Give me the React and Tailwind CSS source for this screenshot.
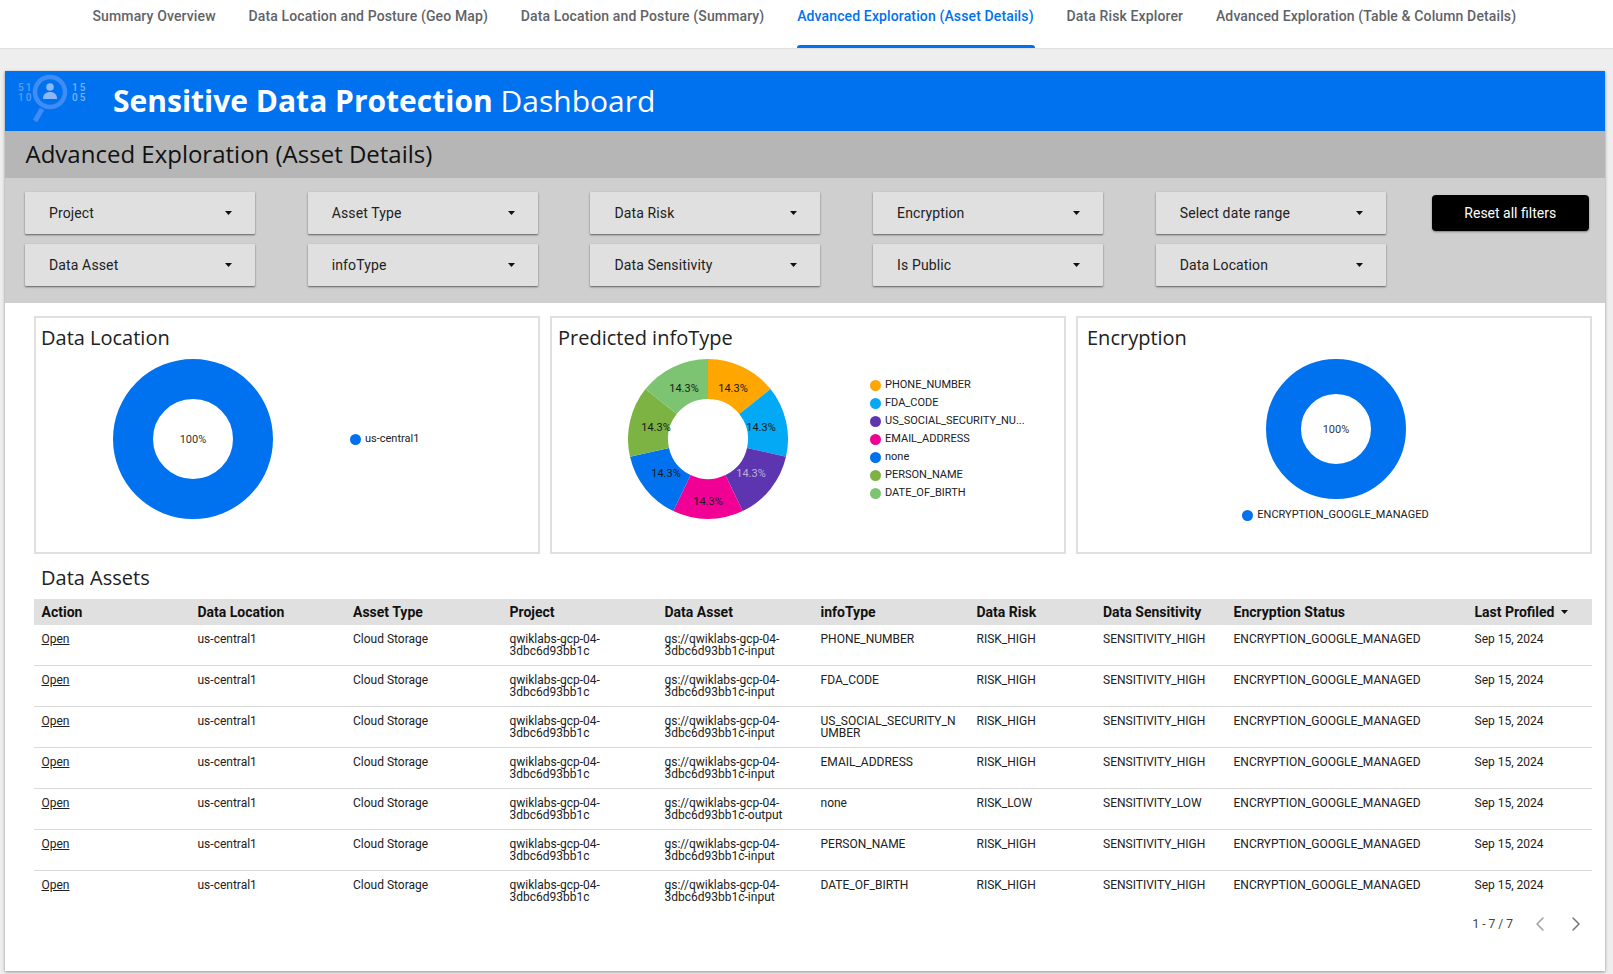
import React from "react";
import { ChevronLeft, ChevronRight } from "lucide-react";

const tabs = [
  "Summary Overview",
  "Data Location and Posture (Geo Map)",
  "Data Location and Posture (Summary)",
  "Advanced Exploration (Asset Details)",
  "Data Risk Explorer",
  "Advanced Exploration (Table & Column Details)",
];

const filters = [
  "Project",
  "Asset Type",
  "Data Risk",
  "Encryption",
  "Select date range",
  "Data Asset",
  "infoType",
  "Data Sensitivity",
  "Is Public",
  "Data Location",
];

// dx/dy: where the percent label sits, measured from the donut centre
const slices = [
  { name: "PHONE_NUMBER", color: "#ffa600", dx: 25, dy: -51 },
  { name: "FDA_CODE", color: "#03a9f4", dx: 53, dy: -12 },
  { name: "US_SOCIAL_SECURITY_NU...", color: "#5e35b1", dx: 43, dy: 34, light: true },
  { name: "EMAIL_ADDRESS", color: "#f10096", dx: 0, dy: 62 },
  { name: "none", color: "#0072f0", dx: -42, dy: 34 },
  { name: "PERSON_NAME", color: "#7cb342", dx: -52, dy: -12 },
  { name: "DATE_OF_BIRTH", color: "#7cc471", dx: -24, dy: -51 },
];

const columns = [
  { label: "Action", width: "w-[156px]" },
  { label: "Data Location", width: "w-[155.5px]" },
  { label: "Asset Type", width: "w-[156.5px]" },
  { label: "Project", width: "w-[155px]" },
  { label: "Data Asset", width: "w-[156px]" },
  { label: "infoType", width: "w-[156px]" },
  { label: "Data Risk", width: "w-[126.5px]" },
  { label: "Data Sensitivity", width: "w-[130.5px]" },
  { label: "Encryption Status", width: "w-[241px]" },
  { label: "Last Profiled", width: "w-[125px]" },
];

const rows = [
  ["input", "PHONE_NUMBER", "RISK_HIGH", "SENSITIVITY_HIGH"],
  ["input", "FDA_CODE", "RISK_HIGH", "SENSITIVITY_HIGH"],
  ["input", "US_SOCIAL_SECURITY_NUMBER", "RISK_HIGH", "SENSITIVITY_HIGH"],
  ["input", "EMAIL_ADDRESS", "RISK_HIGH", "SENSITIVITY_HIGH"],
  ["output", "none", "RISK_LOW", "SENSITIVITY_LOW"],
  ["input", "PERSON_NAME", "RISK_HIGH", "SENSITIVITY_HIGH"],
  ["input", "DATE_OF_BIRTH", "RISK_HIGH", "SENSITIVITY_HIGH"],
];

const point = (c, r, deg) => {
  const a = ((deg - 90) * Math.PI) / 180;
  return [c + r * Math.cos(a), c + r * Math.sin(a)];
};

const slicePath = (c, outer, inner, from, to) => {
  const [x1, y1] = point(c, outer, from);
  const [x2, y2] = point(c, outer, to);
  const [x3, y3] = point(c, inner, to);
  const [x4, y4] = point(c, inner, from);
  return `M${x1} ${y1}A${outer} ${outer} 0 0 1 ${x2} ${y2}L${x3} ${y3}A${inner} ${inner} 0 0 0 ${x4} ${y4}Z`;
};

const Caret = () => (
  <svg width="7" height="4" viewBox="0 0 7 4" className="shrink-0">
    <path d="M0 0h7L3.5 4z" fill="#111" />
  </svg>
);

const Logo = () => (
  <div className="relative h-[60px] w-[108px] shrink-0">
    <svg width="50" height="56" viewBox="0 0 50 56" className="absolute left-[20px] top-[-2px]">
      <circle cx="25" cy="24" r="15" fill="none" stroke="#3f8cf4" strokeWidth="4.5" />
      <circle cx="25" cy="19" r="3.8" fill="#8ab8f9" />
      <path d="M18 31c0-5 3-7 7-7s7 2 7 7z" fill="#8ab8f9" />
      <path d="M17 41l-7 12" stroke="#3f8cf4" strokeWidth="5" />
    </svg>
    <div className="absolute left-[13px] top-[13px] text-[10px] leading-[10px] font-['Roboto',sans-serif] font-medium tracking-[2px] text-[#5b9df6]">
      51
      <br />
      10
    </div>
    <div className="absolute left-[67px] top-[13px] text-[10px] leading-[10px] font-['Roboto',sans-serif] font-medium tracking-[2px] text-[#7eb2f7]">
      15
      <br />
      05
    </div>
  </div>
);

const Card = ({ title, className, titleClass, children }) => (
  <div className={`h-[238px] border-2 border-[#e0e0e0] bg-white ${className}`}>
    <div className={`h-[41px] pt-[6px] font-['Open_Sans',sans-serif] text-[20px] leading-[28px] text-[#212121] ${titleClass}`}>
      {title}
    </div>
    {children}
  </div>
);

const LegendItem = ({ color, name }) => (
  <div className="flex h-[18px] items-center gap-[4px] text-[11px] text-[#212121]">
    <span className="h-[11px] w-[11px] rounded-full" style={{ backgroundColor: color }} />
    <span>{name}</span>
  </div>
);

const FullDonut = ({ size }) => {
  const c = size / 2;
  return (
    <svg width={size} height={size} viewBox={`0 0 ${size} ${size}`} className="shrink-0">
      <circle cx={c} cy={c} r={c * 0.75} fill="none" stroke="#0072f0" strokeWidth={c / 2} />
      <text x={c} y={c + 4} textAnchor="middle" fontSize="11" fill="#333">
        100%
      </text>
    </svg>
  );
};

const InfoTypeDonut = () => {
  const step = 360 / slices.length;
  return (
    <svg width="160" height="160" viewBox="0 0 160 160" className="shrink-0">
      {slices.map((s, i) => (
        <path key={s.name} d={slicePath(80, 80, 40, i * step, (i + 1) * step)} fill={s.color} />
      ))}
      {slices.map((s) => (
        <text
          key={s.name}
          x={80 + s.dx}
          y={80 + s.dy + 4}
          textAnchor="middle"
          fontSize="11"
          fill={s.light ? "#b9b0d6" : "#1a1a1a"}
        >
          14.3%
        </text>
      ))}
    </svg>
  );
};

const App = () => {
  return (
    <div className="flex h-[974px] w-full flex-col overflow-hidden bg-[#eeeeee] font-['Roboto',sans-serif]">
      <nav className="flex h-[49px] shrink-0 gap-[32.8px] border-b border-[#e0e0e0] bg-white pl-[92.5px]">
        {tabs.map((tab, i) => (
          <div
            key={tab}
            className={`relative h-[48px] pt-[6px] text-[14px] leading-[20px] font-medium tracking-[0.13px] ${
              i === 3 ? "text-[#0072f0]" : "text-[#5f6368]"
            }`}
          >
            {tab}
            {i === 3 && (
              <span className="absolute bottom-0 left-0 right-[-1px] h-[3px] rounded-t-[3px] bg-[#0072f0]" />
            )}
          </div>
        ))}
      </nav>

      <main className="ml-[5px] mr-[8px] mt-[22px] flex h-[900px] flex-col bg-white shadow-[0_1px_3px_rgba(0,0,0,0.4)]">
        <header className="flex h-[60px] shrink-0 items-center bg-[#0072f0] pb-[2px] font-['Open_Sans',sans-serif] text-[30px] text-white">
          <Logo />
          <div>
            <span className="font-bold">Sensitive Data Protection</span>
            <span className="font-normal"> Dashboard</span>
          </div>
        </header>

        <div className="flex h-[47px] shrink-0 items-center bg-[#b6b6b6] pb-[2px] pl-[20.5px] font-['Open_Sans',sans-serif] text-[24px] text-[#111]">
          Advanced Exploration (Asset Details)
        </div>

        <div className="flex h-[125px] shrink-0 bg-[#cfcfcf] pl-[20px] pt-[14px]">
          <div className="grid h-[94px] grid-cols-[repeat(5,230px)] gap-x-[52.7px] gap-y-[10px]">
            {filters.map((f) => (
              <div
                key={f}
                className="flex h-[42px] items-center justify-between rounded-[1px] bg-[#e0e0e0] pl-[24px] pr-[23px] text-[14px] tracking-[0.13px] text-[#212121] shadow-[0_1px_2px_rgba(0,0,0,0.55)]"
              >
                <span>{f}</span>
                <Caret />
              </div>
            ))}
          </div>
          <button className="ml-[46px] mt-[3px] h-[36px] w-[157px] rounded-[4px] bg-black text-[14px] text-white shadow-[0_1px_2px_rgba(0,0,0,0.4)]">
            Reset all filters
          </button>
        </div>

        <div className="mt-[13px] flex gap-[10px] pl-[29px]">
          <Card title="Data Location" className="w-[506px]" titleClass="pl-[5px]">
            <div className="flex items-center pl-[77px]">
              <FullDonut size={160} />
              <div className="ml-[77px]">
                <LegendItem color="#0072f0" name="us-central1" />
              </div>
            </div>
          </Card>
          <Card title="Predicted infoType" className="w-[516px]" titleClass="pl-[6px]">
            <div className="flex items-center pl-[76px]">
              <InfoTypeDonut />
              <div className="ml-[82px]">
                {slices.map((s) => (
                  <LegendItem key={s.name} color={s.color} name={s.name} />
                ))}
              </div>
            </div>
          </Card>
          <Card title="Encryption" className="w-[516px]" titleClass="pl-[9px]">
            <div className="flex flex-col items-center pl-[3px]">
              <FullDonut size={140} />
              <div className="mt-[7px]">
                <LegendItem color="#0072f0" name="ENCRYPTION_GOOGLE_MANAGED" />
              </div>
            </div>
          </Card>
        </div>

        <div className="flex h-[45px] items-center pl-[36px] pt-[3px] font-['Open_Sans',sans-serif] text-[20px] text-[#212121]">
          Data Assets
        </div>

        <div className="ml-[29px] w-[1558px]">
          <table className="w-full table-fixed border-separate border-spacing-0 text-left">
            <colgroup>
              {columns.map((c) => (
                <col key={c.label} className={c.width} />
              ))}
            </colgroup>
            <thead>
              <tr className="h-[26px] bg-[#e0e0e0] text-[14px] text-[#111]">
                {columns.map((c) => (
                  <th key={c.label} className="px-[7.5px] py-0 font-bold">
                    <span className="inline-flex items-center gap-[6px]">
                      {c.label}
                      {c.label === "Last Profiled" && <Caret />}
                    </span>
                  </th>
                ))}
              </tr>
            </thead>
            <tbody>
              {rows.map(([kind, info, risk, sens], i) => (
                <tr key={info} className="h-[41px] align-top text-[12px] leading-[12px] text-[#212121]">
                  {[
                    <span className="underline">Open</span>,
                    "us-central1",
                    "Cloud Storage",
                    "qwiklabs-gcp-04-3dbc6d93bb1c",
                    `gs://qwiklabs-gcp-04-3dbc6d93bb1c-${kind}`,
                    info,
                    risk,
                    sens,
                    "ENCRYPTION_GOOGLE_MANAGED",
                    "Sep 15, 2024",
                  ].map((value, j) => (
                    <td
                      key={j}
                      className={`px-[7.5px] pt-[8px] ${j === 5 ? "break-all" : ""} ${
                        i < rows.length - 1 ? "border-b border-[#d9d9d9]" : ""
                      }`}
                    >
                      {value}
                    </td>
                  ))}
                </tr>
              ))}
            </tbody>
          </table>
          <div className="flex h-[23px] items-center justify-end text-[12px] text-[#424242]">
            <span className="mr-[15px]">1 - 7 / 7</span>
            <ChevronLeft size={24} strokeWidth={1.5} className="text-[#9e9e9e]" />
            <ChevronRight size={24} strokeWidth={1.5} className="ml-[12px] mr-[4px] text-[#757575]" />
          </div>
        </div>
      </main>
    </div>
  );
};

export default App;
